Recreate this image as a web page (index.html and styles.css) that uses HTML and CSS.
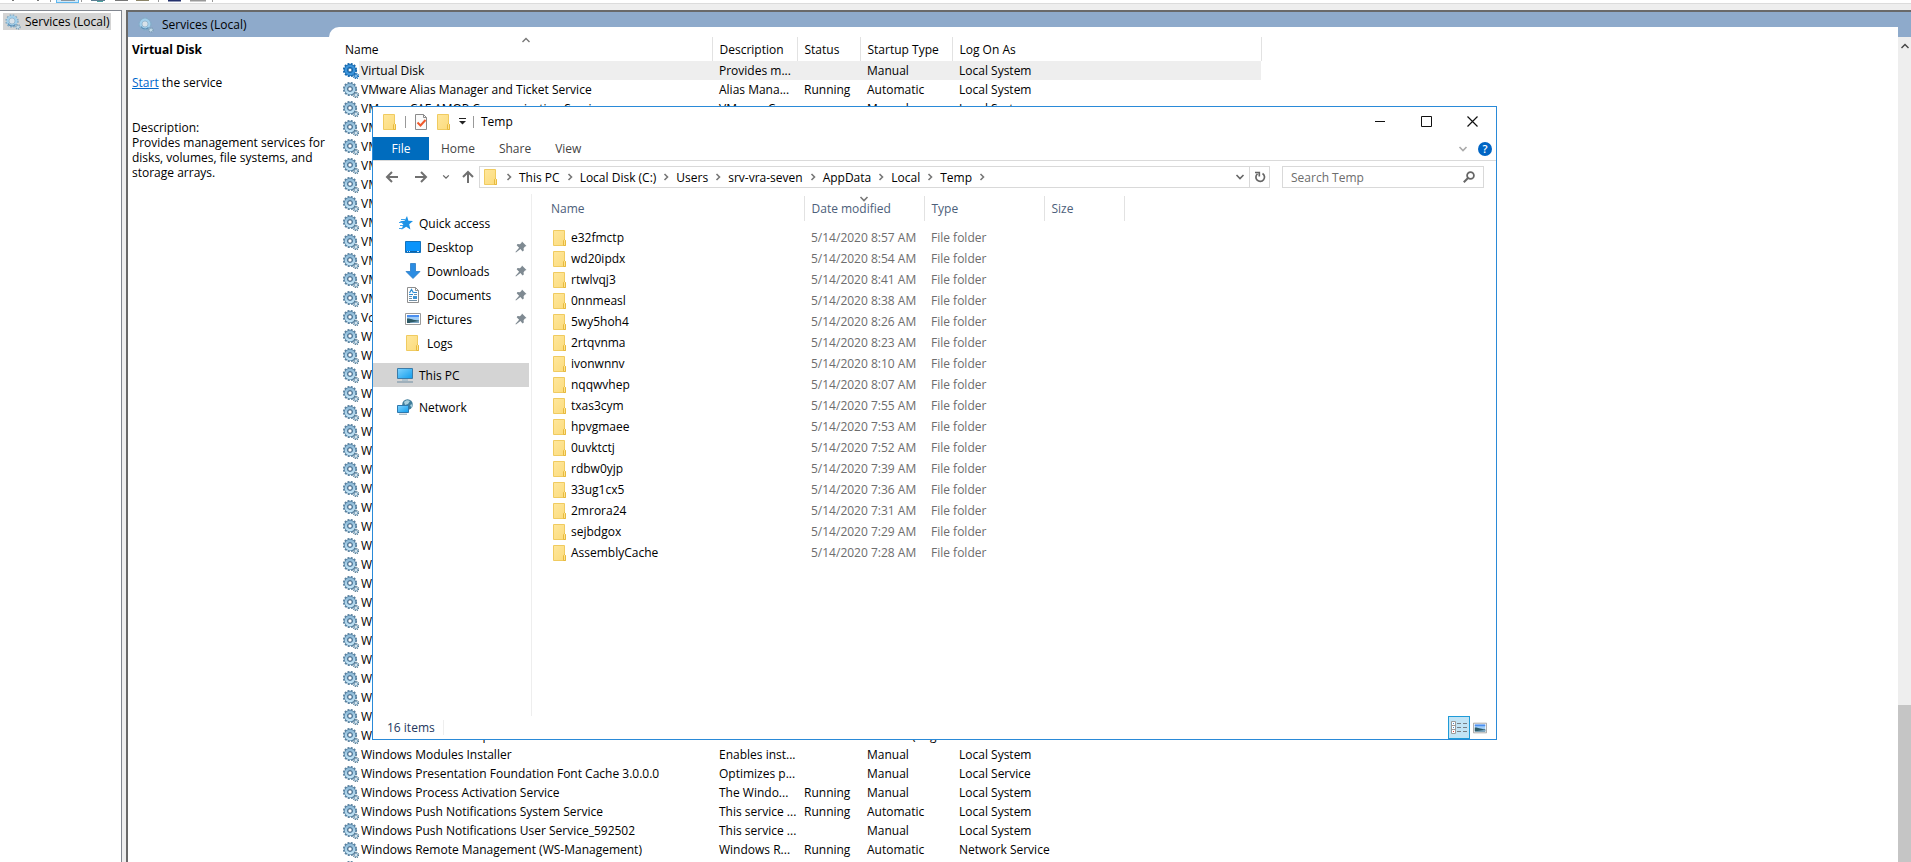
FILE: index.html
```html
<!DOCTYPE html>
<html lang="en">
<head>
  <meta charset="UTF-8">
  <title>Services</title>
  <meta name="viewport" content="width=device-width, initial-scale=1">
  <link rel="stylesheet" href="styles.css">
</head>
<body>
  <!-- Icon sprite -->
  <svg class="sprite" aria-hidden="true">
    <defs>
      <linearGradient id="gearFill" x1="0" y1="0" x2="0" y2="1">
        <stop offset="0" stop-color="#8fbbd8"/><stop offset="1" stop-color="#c2e4f6"/>
      </linearGradient>
      <linearGradient id="folderFill" x1="0" y1="0" x2="1" y2="1">
        <stop offset="0" stop-color="#ffe79c"/><stop offset="1" stop-color="#fbdb7c"/>
      </linearGradient>
      <linearGradient id="screenFill" x1="0" y1="0" x2="1" y2="1">
        <stop offset="0" stop-color="#7fd3ff"/><stop offset="1" stop-color="#119dec"/>
      </linearGradient>
    </defs>
    <symbol id="gear" viewBox="0 0 16 16">
      <circle cx="7" cy="7" r="6" fill="none" stroke="#5b829f" stroke-width="2.200" stroke-dasharray="1.900 1.240"/>
      <circle cx="7" cy="7" r="4" fill="none" stroke="#4f7b9d" stroke-width="4"/>
      <circle cx="7" cy="7" r="4.100" fill="none" stroke="url(#gearFill)" stroke-width="2.600"/>
      <circle cx="7" cy="7" r="2.200" fill="#fff" stroke="#44698a" stroke-width="1"/>
      <circle cx="13" cy="13" r="2.500" fill="none" stroke="#54788f" stroke-width="1.400" stroke-dasharray="1.100 .860"/>
      <circle cx="13" cy="13" r="1.500" fill="#fff" stroke="#7ba5c0" stroke-width="1.200"/>
    </symbol>
    <symbol id="gear-on" viewBox="0 0 16 16">
      <circle cx="7" cy="7" r="6" fill="none" stroke="#1869ae" stroke-width="2.200" stroke-dasharray="1.900 1.240"/>
      <circle cx="7" cy="7" r="4" fill="none" stroke="#1668ad" stroke-width="4"/>
      <circle cx="7" cy="7" r="4.100" fill="none" stroke="#3c94db" stroke-width="2.400"/>
      <circle cx="7" cy="7" r="2" fill="#fff" stroke="#125b9c" stroke-width="1"/>
      <circle cx="13" cy="13" r="2.500" fill="none" stroke="#1869ae" stroke-width="1.400" stroke-dasharray="1.100 .860"/>
      <circle cx="13" cy="13" r="1.500" fill="#9fd0f5" stroke="#2b80c8" stroke-width="1.200"/>
    </symbol>
    <symbol id="gear-pale" viewBox="0 0 16 16">
      <circle cx="7" cy="7" r="5.800" fill="none" stroke="#84adc8" stroke-width="1.800" stroke-dasharray="1.700 1.330"/>
      <circle cx="7" cy="7" r="4.200" fill="#d8e2ea" stroke="#a2d0ec" stroke-width="2.400"/>
      <path d="M3 9.500a4.600 4.600 0 0 0 7.500 1" fill="none" stroke="#5f8fb4" stroke-width="1.200"/>
      <circle cx="7" cy="7" r="3" fill="none" stroke="#7fa5c0" stroke-width=".6"/>
      <circle cx="13" cy="13" r="2" fill="#c4dcea" stroke="#7c9fb6" stroke-width="1.600" stroke-dasharray="1 .800"/>
    </symbol>
    <symbol id="folder" viewBox="0 0 16 16">
      <path d="M1.500.5h11v9l1 1v5h-12z" fill="url(#folderFill)" stroke="#f0cb60"/>
      <path d="M11.500 15.500v-5l1-1 1 1v5z" fill="#ffe48d" stroke="#e7b93f"/>
    </symbol>
    <symbol id="doc-check" viewBox="0 0 16 16">
      <path d="M2.500.5h8l3 3v12h-11z" fill="#fafafa" stroke="#8b8b8b"/>
      <path d="M10.500.5v3h3" fill="none" stroke="#8b8b8b"/>
      <path d="M4.500 8.500l3 3 5-5.500" fill="none" stroke="#f0592b" stroke-width="2"/>
    </symbol>
    <symbol id="star" viewBox="0 0 16 16">
      <path d="M10 1l1.400 4.800 4.600.2-3.800 3.200 1.200 5.300-4.200-2.800-4.700 3 1.800-5.200L3 6.300l4.600-.5z" fill="#1c92e6"/>
      <path d="M4 4.500h4M2 7.500h4M3 10.500h3M2 13.500h4" stroke="#3fa4ec" stroke-width="1"/>
    </symbol>
    <symbol id="desktop" viewBox="0 0 16 16">
      <path d="M.5 2.500h15v11H.5z" fill="#0a94fb" stroke="#1272bd"/>
      <path d="M1 12.500h14" stroke="#0e62a6"/>
      <path d="M2 12.500h1M4 12.500h1M12 12.500h2" stroke="#bfe2ff"/>
    </symbol>
    <symbol id="download" viewBox="0 0 16 16">
      <path d="M5.500.5h5v8h4.500L8 15.500 1 8.500h4.500z" fill="#2b8ce2" stroke="#2a7cc6" stroke-width=".8"/>
    </symbol>
    <symbol id="document" viewBox="0 0 16 16">
      <path d="M2.500.5h8l3 3v12h-11z" fill="#fff" stroke="#8f8f8f"/>
      <path d="M10.500.5v3h3" fill="none" stroke="#8f8f8f"/>
      <path d="M4.500 6l2-3.500 2 3.500M9 5.500h3M4 7.500h4" fill="none" stroke="#2b8ad0" stroke-width="1.200"/>
      <path d="M4 9.500h3M4 11.500h3M4 13.500h8M9 7.500h3" stroke="#7390a6"/>
      <path d="M8 9h4v3H8z" fill="#3f93d2"/>
    </symbol>
    <symbol id="picture" viewBox="0 0 16 16">
      <path d="M.5 2.500h15v11H.5z" fill="#fff" stroke="#9b9b9b"/>
      <path d="M2 4h12v8H2z" fill="#9fcdf7"/>
      <path d="M2 4h12v2H2z" fill="#4c8ff0"/>
      <path d="M2 7.500c3-.5 5 1.500 12 2V12H2z" fill="#2d5a66"/>
      <path d="M5 11.500l9-1.500v2H5z" fill="#7ba6c4"/>
    </symbol>
    <symbol id="pc" viewBox="0 0 16 16">
      <path d="M.5 1.500h15v10H.5z" fill="url(#screenFill)" stroke="#3b7ba8"/>
      <path d="M5 13h6" stroke="#8ab0c6"/>
      <path d="M0 15h16" stroke="#7d98aa" stroke-width="1.200"/>
    </symbol>
    <symbol id="network" viewBox="0 0 16 16">
      <circle cx="10.500" cy="5.500" r="5.300" fill="#3f7d9b"/>
      <path d="M7 3c2-2 4-2 6-1l-2 3-3 1zM13 6l2.500-1-1 4z" fill="#a9d0de"/>
      <path d="M.5 6.500h11v7H.5z" fill="url(#screenFill)" stroke="#2f78ad"/>
      <path d="M2 15.200h8" stroke="#8aa0ae"/>
    </symbol>
    <symbol id="pin" viewBox="0 0 12 12">
      <path d="M7 .5L11.500 5l-1.500.6-1.400 1.600.2 2.400-1.200.8L5.400 8 1 11.600.4 11l3.700-4.300L1.700 4.300l.8-1.200 2.400.1L6.500 1.800z" fill="#7f8a92"/>
    </symbol>
    <symbol id="back" viewBox="0 0 14 14"><path d="M7 2L2 7l5 5M2 7h11" fill="none" stroke="#707070" stroke-width="2"/></symbol>
    <symbol id="forward" viewBox="0 0 14 14"><path d="M7 2l5 5-5 5M12 7H1" fill="none" stroke="#707070" stroke-width="2"/></symbol>
    <symbol id="up" viewBox="0 0 14 14"><path d="M2 7l5-5 5 5M7 2v11" fill="none" stroke="#707070" stroke-width="2"/></symbol>
    <symbol id="chev-down" viewBox="0 0 10 10"><path d="M1.500 3L5 6.500 8.500 3" fill="none" stroke="currentColor" stroke-width="1.600"/></symbol>
    <symbol id="chev-up" viewBox="0 0 10 10"><path d="M1.500 7L5 3.500 8.500 7" fill="none" stroke="currentColor" stroke-width="1.400"/></symbol>
    <symbol id="chev-right" viewBox="0 0 6 8"><path d="M1.500 1L4.500 4l-3 3" fill="none" stroke="#777" stroke-width="1.600"/></symbol>
    <symbol id="refresh" viewBox="0 0 12 12"><path d="M8.500 2.500a4.300 4.300 0 1 1-5 .3M1 1.500h4.300v4" fill="none" stroke="#666" stroke-width="1.700"/></symbol>
    <symbol id="search" viewBox="0 0 12 12"><circle cx="7.500" cy="4.500" r="3.400" fill="none" stroke="#666" stroke-width="1.800"/><path d="M5 7L.8 11.200" stroke="#666" stroke-width="2"/></symbol>
    <symbol id="details" viewBox="0 0 16 14">
      <path d="M.5.5h4v12h-4zM.5 4.500h4M.5 8.500h4" fill="#fff" stroke="#9a9a9a"/>
      <path d="M6 2.500h4M12 2.500h4M6 6.500h4M12 6.500h4M6 10.500h4M12 10.500h4" stroke="#777f86"/>
      <path d="M2 2.500h1M2 6.500h1" stroke="#4b8fd0"/><path d="M2 10.500h1" stroke="#e04040"/>
    </symbol>
  </svg>

  <div class="toolbar" aria-hidden="true">
    <svg width="220" height="3" viewBox="0 0 220 3">
      <path d="M12 .5h2M37 .5h2" stroke="#777"/>
      <path d="M50.500 0v2M81.500 0v2M158.500 0v2M212.500 0v2" stroke="#999"/>
      <path d="M56 0h23v3H56z" fill="#5fb8f0"/><path d="M57 0h21v2H57z" fill="#cde8fa"/>
      <path d="M61 .5h14" stroke="#8d959b"/>
      <path d="M91 .5h14" stroke="#5b7f92"/><path d="M97 1.500h6" stroke="#4ca5a0"/>
      <path d="M115 .5h13" stroke="#777"/><path d="M136 .5h13" stroke="#8b8468"/>
      <path d="M168 .5h13" stroke="#23306c" stroke-width="2"/>
      <path d="M190 .5h16" stroke="#999" stroke-width="2"/>
    </svg>
  </div>

  <div class="console">
    <aside class="tree">
      <div class="tree-item"><svg class="icon"><use href="#gear-pale"/></svg>Services (Local)</div>
    </aside>

    <main class="services">
      <header class="banner"><svg class="icon"><use href="#gear-pale"/></svg>Services (Local)</header>
      <div class="services-body">
        <section class="detail">
          <h1>Virtual Disk</h1>
          <p class="action"><a href="#">Start</a> the service</p>
          <p>Description:<br>Provides management services for disks, volumes, file systems, and storage arrays.</p>
        </section>

        <section class="list">
          <table class="service-table">
            <colgroup><col class="c-name"><col class="c-desc"><col class="c-status"><col class="c-startup"><col class="c-logon"></colgroup>
            <thead>
              <tr><th>Name<svg class="sort"><use href="#chev-up"/></svg></th><th>Description</th><th>Status</th><th>Startup Type</th><th>Log On As</th></tr>
            </thead>
            <tbody id="serviceRows"></tbody>
          </table>
        </section>

        <div class="scrollbar">
          <svg class="scroll-up"><use href="#chev-up"/></svg>
          <div class="scroll-thumb"></div>
        </div>
      </div>
    </main>
  </div>

  <!-- Explorer window -->
  <div class="explorer">
    <div class="titlebar">
      <svg class="icon"><use href="#folder"/></svg>
      <span class="bar"></span>
      <svg class="icon"><use href="#doc-check"/></svg>
      <svg class="icon"><use href="#folder"/></svg>
      <svg class="quick-arrow" viewBox="0 0 7 7"><path d="M0 .5h7" stroke="#222"/><path d="M0 3h7L3.500 6.500z" fill="#222"/></svg>
      <span class="bar"></span>
      <span class="title">Temp</span>
      <div class="window-buttons">
        <button aria-label="Minimize"><svg width="11" height="11"><path d="M0 5.500h10" stroke="#111"/></svg></button>
        <button aria-label="Maximize"><svg width="11" height="11"><path d="M.5.5h10v10H.5z" fill="none" stroke="#111"/></svg></button>
        <button aria-label="Close"><svg width="11" height="11"><path d="M.5.5l10 10M10.500.5l-10 10" stroke="#111" stroke-width="1.200"/></svg></button>
      </div>
    </div>

    <div class="ribbon">
      <button class="tab file">File</button>
      <button class="tab">Home</button>
      <button class="tab">Share</button>
      <button class="tab">View</button>
      <div class="ribbon-end">
        <svg class="chev pale"><use href="#chev-down"/></svg>
        <button class="help" aria-label="Help">?</button>
      </div>
    </div>

    <div class="address-row">
      <div class="nav-buttons">
        <button aria-label="Back"><svg class="arrow"><use href="#back"/></svg></button>
        <button aria-label="Forward"><svg class="arrow"><use href="#forward"/></svg></button>
        <button class="recent" aria-label="Recent locations"><svg class="chev small"><use href="#chev-down"/></svg></button>
        <button aria-label="Up"><svg class="arrow"><use href="#up"/></svg></button>
      </div>
      <nav class="address">
        <svg class="icon"><use href="#folder"/></svg>
        <div class="crumbs" id="crumbs"></div>
        <button class="drop" aria-label="Previous locations"><svg class="chev"><use href="#chev-down"/></svg></button>
        <button class="refresh" aria-label="Refresh"><svg width="12" height="12"><use href="#refresh"/></svg></button>
      </nav>
      <label class="search">
        <input type="text" placeholder="Search Temp" aria-label="Search Temp">
        <svg width="12" height="12"><use href="#search"/></svg>
      </label>
    </div>

    <div class="content">
      <ul class="places">
        <li><svg class="icon"><use href="#star"/></svg>Quick access</li>
        <li class="sub"><svg class="icon"><use href="#desktop"/></svg>Desktop<svg class="pin"><use href="#pin"/></svg></li>
        <li class="sub"><svg class="icon"><use href="#download"/></svg>Downloads<svg class="pin"><use href="#pin"/></svg></li>
        <li class="sub"><svg class="icon"><use href="#document"/></svg>Documents<svg class="pin"><use href="#pin"/></svg></li>
        <li class="sub"><svg class="icon"><use href="#picture"/></svg>Pictures<svg class="pin"><use href="#pin"/></svg></li>
        <li class="sub"><svg class="icon"><use href="#folder"/></svg>Logs</li>
        <li class="group current"><svg class="icon"><use href="#pc"/></svg>This PC</li>
        <li class="group"><svg class="icon"><use href="#network"/></svg>Network</li>
      </ul>
      <div class="files">
        <table class="file-table">
          <colgroup><col class="f-name"><col class="f-date"><col class="f-type"><col class="f-size"></colgroup>
          <thead>
            <tr><th>Name</th><th>Date modified<svg class="sort"><use href="#chev-down"/></svg></th><th>Type</th><th>Size</th></tr>
          </thead>
          <tbody id="fileRows"></tbody>
        </table>
      </div>
    </div>

    <footer class="status">
      <span class="count">16 items</span>
      <div class="views">
        <button class="active" aria-label="Details"><svg width="16" height="14"><use href="#details"/></svg></button>
        <button aria-label="Large icons"><svg width="14" height="14"><use href="#picture"/></svg></button>
      </div>
    </footer>
  </div>

  <script src="app.js"></script>
</body>
</html>
```

FILE: styles.css
```css
* {
  box-sizing: border-box;
}

body {
  margin: 0;
  height: 100vh;
  display: flex;
  flex-direction: column;
  overflow: hidden;
  position: relative;
  background: #eee;
  color: #000;
  font: 12px/15px "Open Sans", "Noto Sans", sans-serif;
}

button {
  border: 0;
  padding: 0;
  background: none;
  color: inherit;
  font: inherit;
  display: flex;
  align-items: center;
  justify-content: center;
}

svg {
  flex: none;
}

.sprite {
  position: absolute;
  width: 0;
  height: 0;
}

.icon {
  width: 16px;
  height: 16px;
}

.toolbar {
  height: 4px;
  flex: none;
  background: #fff;
  border-bottom: 1px solid #dcdcdc;
}

.toolbar svg {
  display: block;
}

/* Console panes */

.console {
  flex: 1;
  min-height: 0;
  display: flex;
  gap: 4px;
  padding-top: 6px;
}

.tree {
  width: 122px;
  flex: none;
  padding: 2px 0 0 3px;
  background: #fff;
  border-top: 1px solid #828790;
  border-right: 1px solid #828790;
}

.tree-item {
  width: 108px;
  height: 17px;
  display: flex;
  align-items: center;
  gap: 4px;
  padding-left: 2px;
  background: #d4d4d4;
  white-space: nowrap;
}

.services {
  flex: 1;
  min-width: 0;
  display: flex;
  flex-direction: column;
  background: #fff;
  border-top: 2px solid #696969;
  border-left: 2px solid #696969;
}

.banner {
  height: 25px;
  flex: none;
  display: flex;
  align-items: center;
  gap: 8px;
  padding-left: 10px;
  background: #8eaacb;
}

.services-body {
  flex: 1;
  min-height: 0;
  display: flex;
}

.detail {
  width: 201px;
  flex: none;
  padding: 5px 0 0 4px;
}

.detail h1 {
  margin: 0;
  font-size: 12px;
}

.detail p {
  margin: 0;
}

.detail .action {
  margin: 18px 0 30px;
}

.detail a {
  color: #0066cc;
}

.list {
  flex: 1;
  min-width: 0;
  margin-top: -10px;
  padding: 10px 0 0 12px;
  background: #fff;
  border-radius: 10px 0 0 0;
  overflow: hidden;
}

table {
  table-layout: fixed;
  border-collapse: collapse;
}

th,
td {
  padding: 0;
  text-align: left;
  font-weight: 400;
  white-space: nowrap;
}

th {
  position: relative;
}

.sort {
  position: absolute;
  left: 50%;
  width: 10px;
  height: 10px;
  margin-left: -5px;
  top: -2px;
  color: #777;
}

.service-table {
  width: 920px;
}

.c-name { width: 371px; }
.c-desc { width: 85px; }
.c-status { width: 63px; }
.c-startup { width: 92px; }
.c-logon { width: 309px; }

.service-table th {
  height: 24px;
  padding-left: 7px;
  border-right: 1px solid #e2e2e2;
}

.service-table th:first-child {
  padding-left: 4px;
}

.service-table td {
  height: 19px;
  padding-left: 7px;
}

.service-table td:first-child {
  padding-left: 2px;
}

.service-name {
  display: flex;
  align-items: center;
  gap: 2px;
  height: 19px;
}

.service-table .selected td {
  background: #eee;
}

.service-table .selected td:first-child {
  background: linear-gradient(to right, #fff 18px, #eee 18px);
}

.scrollbar {
  width: 13px;
  flex: none;
  display: flex;
  flex-direction: column;
  justify-content: space-between;
  align-items: center;
  background: #eee;
}

.scroll-up {
  width: 10px;
  height: 10px;
  margin-top: 4px;
  color: #444;
}

.scroll-thumb {
  width: 100%;
  height: 19%;
  background: #c5c5c5;
}

/* Explorer window */

.explorer {
  position: absolute;
  left: 372px;
  top: 106px;
  width: 1125px;
  height: 634px;
  display: flex;
  flex-direction: column;
  background: #fff;
  border: 1px solid #2a8ad8;
}

.titlebar {
  height: 30px;
  flex: none;
  display: flex;
  align-items: center;
  gap: 7px;
  padding: 0 1px 1px 9px;
}

.bar {
  width: 1px;
  height: 12px;
  background: #999;
}

.quick-arrow {
  width: 7px;
  height: 7px;
}

.window-buttons {
  margin-left: auto;
  display: flex;
}

.window-buttons button {
  width: 46px;
  height: 28px;
}

.ribbon {
  height: 24px;
  flex: none;
  display: flex;
  border-bottom: 1px solid #dadada;
  color: #444;
}

.tab {
  height: 23px;
  padding: 0 12px;
}

.tab.file {
  width: 56px;
  background: #006cbe;
  color: #fff;
}

.ribbon-end {
  margin-left: auto;
  padding-right: 4px;
  display: flex;
  align-items: center;
  gap: 10px;
}

.help {
  width: 14px;
  height: 14px;
  border-radius: 50%;
  background: #0065c4;
  color: #fff;
  font-size: 11px;
  font-weight: 600;
}

.chev {
  width: 10px;
  height: 10px;
  color: #666;
}

.chev.pale {
  color: #aaa;
}

.chev.small {
  width: 8px;
  height: 8px;
}

.address-row {
  flex: none;
  display: flex;
  padding: 5px 12px 6px 12px;
}

.nav-buttons {
  width: 94px;
  flex: none;
  display: flex;
  align-items: center;
  gap: 15px;
}

.nav-buttons .recent {
  margin: 0 -4px 0 -1px;
}

.arrow {
  width: 14px;
  height: 14px;
}

.address {
  flex: 1;
  display: flex;
  align-items: center;
  height: 22px;
  padding-left: 3px;
  border: 1px solid #d9d9d9;
}

.crumbs {
  flex: 1;
  display: flex;
  align-items: center;
  gap: 7px;
  padding-left: 7px;
}

.crumbs svg {
  width: 6px;
  height: 8px;
}

.drop {
  width: 18px;
}

.refresh {
  width: 20px;
  height: 20px;
  border-left: 1px solid #d9d9d9;
}

.search {
  width: 202px;
  height: 22px;
  margin-left: 12px;
  display: flex;
  align-items: center;
  padding: 0 8px;
  border: 1px solid #d9d9d9;
}

.search input {
  flex: 1;
  min-width: 0;
  border: 0;
  padding: 0;
  background: none;
  font: inherit;
}

.search input::placeholder {
  color: #6d6d6d;
}

.content {
  flex: 1;
  min-height: 0;
  display: flex;
}

.places {
  width: 159px;
  flex: none;
  margin: 0;
  padding: 17px 2px 0 0;
  list-style: none;
  border-right: 1px solid #eee;
}

.places li {
  height: 24px;
  display: flex;
  align-items: center;
  gap: 6px;
  padding-left: 24px;
}

.places .sub {
  padding-left: 32px;
}

.places .group {
  margin-top: 8px;
}

.places .current {
  background: #d4d4d4;
}

.pin {
  width: 12px;
  height: 12px;
  margin: 0 2px 0 auto;
}

.files {
  flex: 1;
  padding: 2px 0 0 12px;
}

.file-table {
  width: 580px;
  color: #6d6d6d;
}

.f-name { width: 260px; }
.f-date { width: 120px; }
.f-type { width: 120px; }
.f-size { width: 80px; }

.file-table th {
  height: 25px;
  padding-left: 7px;
  border-right: 1px solid #e2e2e2;
  color: #4c607a;
}

/* space between the header and the first row */
.file-table tbody::before {
  content: "";
  display: block;
  height: 6px;
}

.file-table td {
  height: 21px;
  padding-left: 7px;
}

.file-name {
  height: 21px;
  display: flex;
  align-items: center;
  gap: 3px;
  padding-left: 1px;
  color: #000;
}

.status {
  height: 23px;
  flex: none;
  display: flex;
  align-items: center;
  padding-left: 14px;
  color: #24385e;
}

.count {
  padding-right: 8px;
  border-right: 1px solid #eee;
}

.views {
  margin-left: auto;
  padding-right: 9px;
  display: flex;
  gap: 3px;
}

.views .active {
  width: 22px;
  height: 23px;
  background: #c2e4f5;
  border: 1px solid #1f9bd8;
}
```

FILE: app.js
```javascript
const services = [
  ["Virtual Disk", "Provides m...", "", "Manual", "Local System"],
  ["VMware Alias Manager and Ticket Service", "Alias Mana...", "Running", "Automatic", "Local System"],
  ["VMware CAF AMQP Communication Service", "VMware Co...", "", "Manual", "Local System"],
  ["VMware CAF Management Agent Service"],
  ["VMware DEM Orchestrator"],
  ["VMware DEM Worker"],
  ["VMware Infrastructure Agent"],
  ["VMware Management Agent"],
  ["VMware Physical Disk Helper Service"],
  ["VMware Snapshot Provider"],
  ["VMware SVGA Helper Service"],
  ["VMware Tools"],
  ["VMware vCloud Automation Center Service"],
  ["Volume Shadow Copy"],
  ["W3C Logging Service"],
  ["WalletService"],
  ["WarpJITSvc"],
  ["Web Account Manager"],
  ["Windows Audio"],
  ["Windows Audio Endpoint Builder"],
  ["Windows Biometric Service"],
  ["Windows Camera Frame Server"],
  ["Windows Connection Manager"],
  ["Windows Defender Network Inspection"],
  ["Windows Defender Service"],
  ["Windows Driver Foundation"],
  ["Windows Encryption Provider Host Service"],
  ["Windows Error Reporting Service"],
  ["Windows Event Collector"],
  ["Windows Event Log"],
  ["Windows Firewall"],
  ["Windows Font Cache Service"],
  ["Windows Image Acquisition (WIA)"],
  ["Windows Insider Service"],
  ["Windows License Manager Service"],
  ["Windows Mobile Hotspot Service", "Provides th...", "", "Manual (Trig...", "Local Service"],
  ["Windows Modules Installer", "Enables inst...", "", "Manual", "Local System"],
  ["Windows Presentation Foundation Font Cache 3.0.0.0", "Optimizes p...", "", "Manual", "Local Service"],
  ["Windows Process Activation Service", "The Windo...", "Running", "Manual", "Local System"],
  ["Windows Push Notifications System Service", "This service ...", "Running", "Automatic", "Local System"],
  ["Windows Push Notifications User Service_592502", "This service ...", "", "Manual", "Local System"],
  ["Windows Remote Management (WS-Management)", "Windows R...", "Running", "Automatic", "Network Service"],
  ["Windows Search"]
];

const files = [
  ["e32fmctp", "8:57"], ["wd20ipdx", "8:54"], ["rtwlvqj3", "8:41"], ["0nnmeasl", "8:38"],
  ["5wy5hoh4", "8:26"], ["2rtqvnma", "8:23"], ["ivonwnnv", "8:10"], ["nqqwvhep", "8:07"],
  ["txas3cym", "7:55"], ["hpvgmaee", "7:53"], ["0uvktctj", "7:52"], ["rdbw0yjp", "7:39"],
  ["33ug1cx5", "7:36"], ["2mrora24", "7:31"], ["sejbdgox", "7:29"], ["AssemblyCache", "7:28"]
];

const path = ["This PC", "Local Disk (C:)", "Users", "srv-vra-seven", "AppData", "Local", "Temp"];

const icon = (name, cls = "") => `<svg class="${cls}"><use href="#${name}"/></svg>`;

document.getElementById("serviceRows").innerHTML = services.map(([name, desc = "", status = "", startup = "", logon = ""], i) => `
  <tr class="${i === 0 ? "selected" : ""}">
    <td><div class="service-name">${icon(i === 0 ? "gear-on" : "gear", "icon")}<span>${name}</span></div></td>
    <td>${desc}</td><td>${status}</td><td>${startup}</td><td>${logon}</td>
  </tr>`).join("");

document.getElementById("fileRows").innerHTML = files.map(([name, time]) => `
  <tr>
    <td><div class="file-name">${icon("folder", "icon")}${name}</div></td>
    <td>5/14/2020 ${time} AM</td><td>File folder</td><td></td>
  </tr>`).join("");

document.getElementById("crumbs").innerHTML =
  icon("chev-right") + path.map(p => `<span>${p}</span>${icon("chev-right")}`).join("");
```
